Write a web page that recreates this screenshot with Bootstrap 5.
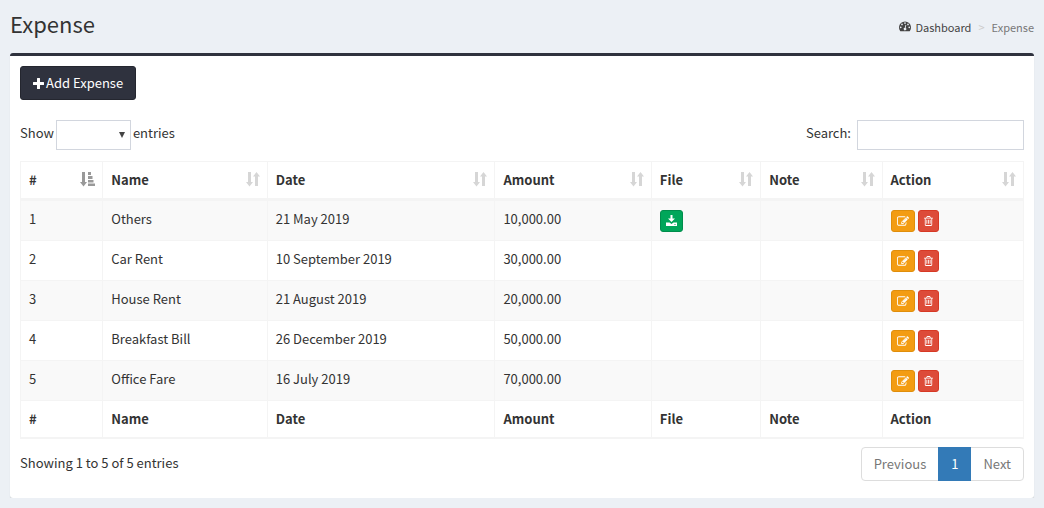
<!DOCTYPE html>
<html lang="en">
<head>
<meta charset="utf-8">
<meta name="viewport" content="width=device-width, initial-scale=1">
<title>Expense</title>
<link rel="stylesheet" href="https://cdn.jsdelivr.net/npm/bootstrap@5.3.0/dist/css/bootstrap.min.css">
<style>
  body { background: #ecf0f5; color: #333; font: 13px/20px "Noto Sans CJK SC", sans-serif; }
  .page { padding: 0 10px; }
  .page-head { padding: 10px 0 13px; }
  .page-head h1 { font-size: 22px; line-height: 26px; font-weight: 400; margin: 0; padding-bottom: 4px; }
  .breadcrumb { font-size: 11px; padding-top: 4px; --bs-breadcrumb-divider: ">"; --bs-breadcrumb-divider-color: #ccc; --bs-breadcrumb-item-padding-x: 7px; --bs-breadcrumb-item-active-color: #777; }
  .breadcrumb a { color: #444; text-decoration: none; }
  .glyph { fill: currentColor; display: block; flex: none; }
  .panel { background: #fff; border-top: 3px solid #2f323e; border-radius: 3px; box-shadow: 0 1px 1px rgba(0,0,0,.15); padding: 10px 10px 17px; }
  .btn-add { --bs-btn-font-size: 13px; --bs-btn-line-height: 20px; --bs-btn-padding-x: 12px; --bs-btn-padding-y: 6px; --bs-btn-border-radius: 3px; --bs-btn-color: #fff; --bs-btn-bg: #2f323e; --bs-btn-border-color: #24262f; --bs-btn-hover-color: #fff; --bs-btn-hover-bg: #24262f; --bs-btn-hover-border-color: #24262f; gap: 2px; }
  .controls { margin: 16px 0 11px; }
  .controls label { display: flex; align-items: center; }
  .len-label { gap: 2px; }
  .search-label { gap: 6px; }
  .field { height: 30px; margin-top: 4px; border: 1px solid #d2d6de; border-radius: 0; background-color: #fff; padding: 4px 10px; }
  .len-select { width: 75px; appearance: none; background: #fff url("data:image/svg+xml,%3Csvg xmlns='http://www.w3.org/2000/svg' viewBox='0 0 6 6'%3E%3Cpath fill='%23444' d='M0 0h6L3 6z'/%3E%3C/svg%3E") no-repeat right 5px center / 6px 6px; }
  .search-box { width: 167px; }
  .expenses { width: 100%; min-width: 640px; table-layout: fixed; border-collapse: separate; border-spacing: 0; border: 1px solid #f4f4f4; border-width: 1px 0 1px 1px; }
  .expenses th, .expenses td { padding: 8px; border: 0 solid #f4f4f4; border-right-width: 1px; vertical-align: top; }
  .expenses thead th { border-bottom-width: 2px; padding-right: 7px; }
  .expenses tbody td, .expenses tfoot th { border-top-width: 1px; }
  .expenses tfoot th { border-bottom-width: 1px; }
  .expenses tbody td { height: 40px; }
  .expenses tbody .tools { padding: 9px 8px 8px; }
  .expenses tbody tr:nth-child(odd) { background: #f9f9f9; }
  .w-id { width: 8.2%; } .w-name { width: 16.4%; } .w-date { width: 22.7%; } .w-amount { width: 15.6%; } .w-file { width: 10.9%; } .w-note { width: 12.1%; }
  .sort { fill: #d6d6d6; margin-top: 1px; }
  .sort-on { fill: #999; }
  .act { height: 22px; padding: 0 5px; border: 1px solid; border-radius: 3px; color: #fff; display: flex; align-items: center; }
  .act-edit { background: #f39c12; border-color: #e08e0b; }
  .act-del { background: #dd4b39; border-color: #d73925; }
  .act-save { background: #00a65a; border-color: #008d4c; }
  .act .glyph { margin-bottom: 1px; }
  .act-group { gap: 3px; }
  .foot { padding-top: 8px; }
  .foot-info { padding-bottom: 2px; }
  .pagination { --bs-pagination-font-size: 13px; --bs-pagination-padding-x: 12px; --bs-pagination-padding-y: 6px; --bs-pagination-color: #777; --bs-pagination-border-color: #ddd; --bs-pagination-disabled-color: #777; --bs-pagination-disabled-bg: #fff; --bs-pagination-disabled-border-color: #ddd; --bs-pagination-active-bg: #337ab7; --bs-pagination-active-border-color: #337ab7; --bs-pagination-border-radius: 4px; }
</style>
</head>
<body>
<svg class="d-none" aria-hidden="true">
  <symbol id="i-edit" viewBox="0 0 1792 1408"><path transform="translate(0 -128)" d="M888 1184l116-116-152-152-116 116v56h96v96h56zm440-720q-16-16-33 1L945 815q-17 17-1 33t33-1l350-350q17-17 1-33zm80 594v190q0 119-84.500 203.500T1120 1536H288q-119 0-203.500-84.500T0 1248V416q0-119 84.500-203.500T288 128h832q63 0 117 25 15 7 18 23 3 17-9 29l-49 49q-14 14-32 8-23-6-45-6H288q-66 0-113 47t-47 113v832q0 66 47 113t113 47h832q66 0 113-47t47-113v-126q0-13 9-22l64-64q15-15 35-7t20 29zm-96-738l288 288-672 672H640V992zm444 132l-92 92-288-288 92-92q28-28 68-28t68 28l152 152q28 28 28 68t-28 68z"/></symbol>
  <symbol id="i-trash" viewBox="192 128 1408 1536"><path d="M704 736v576q0 14-9 23t-23 9h-64q-14 0-23-9t-9-23V736q0-14 9-23t23-9h64q14 0 23 9t9 23zm256 0v576q0 14-9 23t-23 9h-64q-14 0-23-9t-9-23V736q0-14 9-23t23-9h64q14 0 23 9t9 23zm256 0v576q0 14-9 23t-23 9h-64q-14 0-23-9t-9-23V736q0-14 9-23t23-9h64q14 0 23 9t9 23zm128 724V512H448v948q0 22 7 40.500t14.500 27 10.500 8.500h832q3 0 10.500-8.500t14.500-27 7-40.500zM672 384h448l-48-117q-7-9-17-11H738q-10 2-17 11zm928 32v64q0 14-9 23t-23 9h-96v948q0 83-47 143.500t-113 60.500H480q-66 0-113-58.500T320 1464V512h-96q-14 0-23-9t-9-23v-64q0-14 9-23t23-9h309l70-167q15-37 54-63t79-26h320q40 0 79 26t54 63l70 167h309q14 0 23 9t9 23z"/></symbol>
  <symbol id="i-sort" viewBox="0 0 14 16"><path d="M2 1h3v10h2l-3.500 4.500L0 11h2zM9 15V5.500H7L10.500 1 14 5.500h-2V15z"/></symbol>
</svg>
<div class="container-fluid page">
  <header class="page-head d-flex justify-content-between align-items-center">
    <h1>Expense</h1>
    <nav aria-label="breadcrumb">
      <ol class="breadcrumb mb-0">
        <li class="breadcrumb-item"><a href="#" class="d-inline-flex align-items-center gap-1"><svg class="glyph" width="12" height="11" viewBox="0 0 14 12"><path fill-rule="evenodd" d="M1.500 11.500A7 7 0 1 1 12.500 11.500zM2 6a1 1 0 1 0 0 2 1 1 0 0 0 0-2zM3.500 2.600a1 1 0 1 0 0 2 1 1 0 0 0 0-2zM7 1a1 1 0 1 0 0 2 1 1 0 0 0 0-2zM10.500 2.600a1 1 0 1 0 0 2 1 1 0 0 0 0-2zM12 6a1 1 0 1 0 0 2 1 1 0 0 0 0-2zM7.600 4L6.800 7.500a1.500 1.500 0 1 0 1 .2L8.500 4.200z"/></svg>Dashboard</a></li>
        <li class="breadcrumb-item active" aria-current="page">Expense</li>
      </ol>
    </nav>
  </header>
  <main class="panel">
    <button type="button" class="btn btn-add d-flex align-items-center"><svg class="glyph" width="11" height="11" viewBox="0 0 11 11"><path d="M4 .5Q4 0 4.500 0h2Q7 0 7 .5V4h3.500q.5 0 .5.500v2q0 .5-.5.500H7v3.500q0 .5-.5.500h-2Q4 11 4 10.500V7H.5Q0 7 0 6.500v-2Q0 4 .5 4H4z"/></svg>Add Expense</button>
    <div class="controls d-flex flex-wrap justify-content-between">
      <label class="len-label">Show <select class="field len-select"><option></option></select> entries</label>
      <label class="search-label">Search: <input type="search" class="field search-box"></label>
    </div>
    <div class="table-responsive">
      <table class="expenses">
        <colgroup><col class="w-id"><col class="w-name"><col class="w-date"><col class="w-amount"><col class="w-file"><col class="w-note"><col></colgroup>
        <thead>
          <tr>
            <th scope="col"><div class="d-flex justify-content-between"># <svg class="sort sort-on" width="15" height="16" viewBox="0 0 15 16"><path d="M2 1h3v10h2l-3.500 4.500L0 11h2zM8 1h3v3H8zM8 5h4.500v3H8zM8 9h5.500v2.500H8zM8 12.500h7V15H8z"/></svg></div></th>
            <th scope="col"><div class="d-flex justify-content-between">Name <svg class="sort" width="14" height="16"><use href="#i-sort"/></svg></div></th>
            <th scope="col"><div class="d-flex justify-content-between">Date <svg class="sort" width="14" height="16"><use href="#i-sort"/></svg></div></th>
            <th scope="col"><div class="d-flex justify-content-between">Amount <svg class="sort" width="14" height="16"><use href="#i-sort"/></svg></div></th>
            <th scope="col"><div class="d-flex justify-content-between">File <svg class="sort" width="14" height="16"><use href="#i-sort"/></svg></div></th>
            <th scope="col"><div class="d-flex justify-content-between">Note <svg class="sort" width="14" height="16"><use href="#i-sort"/></svg></div></th>
            <th scope="col"><div class="d-flex justify-content-between">Action <svg class="sort" width="14" height="16"><use href="#i-sort"/></svg></div></th>
          </tr>
        </thead>
        <tbody>
          <tr><td>1</td><td>Others</td><td>21 May 2019</td><td>10,000.00</td><td class="tools"><button type="button" class="act act-save" aria-label="Download"><svg class="glyph" width="11" height="11" viewBox="0 0 11 11"><path d="M4.500 0h2v3.500H9L5.500 7 2 3.500h2.500zM0 7.500h3.500l2 1.500 2-1.500H11V11H0zM8.500 9v1h1V9z" fill-rule="evenodd"/></svg></button></td><td></td>
            <td class="tools"><div class="d-flex act-group"><button type="button" class="act act-edit" aria-label="Edit"><svg class="glyph" width="12" height="10"><use href="#i-edit"/></svg></button><button type="button" class="act act-del" aria-label="Delete"><svg class="glyph" width="9" height="10"><use href="#i-trash"/></svg></button></div></td></tr>
          <tr><td>2</td><td>Car Rent</td><td>10 September 2019</td><td>30,000.00</td><td></td><td></td>
            <td class="tools"><div class="d-flex act-group"><button type="button" class="act act-edit" aria-label="Edit"><svg class="glyph" width="12" height="10"><use href="#i-edit"/></svg></button><button type="button" class="act act-del" aria-label="Delete"><svg class="glyph" width="9" height="10"><use href="#i-trash"/></svg></button></div></td></tr>
          <tr><td>3</td><td>House Rent</td><td>21 August 2019</td><td>20,000.00</td><td></td><td></td>
            <td class="tools"><div class="d-flex act-group"><button type="button" class="act act-edit" aria-label="Edit"><svg class="glyph" width="12" height="10"><use href="#i-edit"/></svg></button><button type="button" class="act act-del" aria-label="Delete"><svg class="glyph" width="9" height="10"><use href="#i-trash"/></svg></button></div></td></tr>
          <tr><td>4</td><td>Breakfast Bill</td><td>26 December 2019</td><td>50,000.00</td><td></td><td></td>
            <td class="tools"><div class="d-flex act-group"><button type="button" class="act act-edit" aria-label="Edit"><svg class="glyph" width="12" height="10"><use href="#i-edit"/></svg></button><button type="button" class="act act-del" aria-label="Delete"><svg class="glyph" width="9" height="10"><use href="#i-trash"/></svg></button></div></td></tr>
          <tr><td>5</td><td>Office Fare</td><td>16 July 2019</td><td>70,000.00</td><td></td><td></td>
            <td class="tools"><div class="d-flex act-group"><button type="button" class="act act-edit" aria-label="Edit"><svg class="glyph" width="12" height="10"><use href="#i-edit"/></svg></button><button type="button" class="act act-del" aria-label="Delete"><svg class="glyph" width="9" height="10"><use href="#i-trash"/></svg></button></div></td></tr>
        </tbody>
        <tfoot>
          <tr><th>#</th><th>Name</th><th>Date</th><th>Amount</th><th>File</th><th>Note</th><th>Action</th></tr>
        </tfoot>
      </table>
    </div>
    <div class="foot d-flex flex-wrap justify-content-between align-items-center">
      <div class="foot-info">Showing 1 to 5 of 5 entries</div>
      <nav aria-label="Table pages">
        <ul class="pagination mb-0">
          <li class="page-item disabled"><a class="page-link" href="#">Previous</a></li>
          <li class="page-item active"><a class="page-link" href="#" aria-current="page">1</a></li>
          <li class="page-item disabled"><a class="page-link" href="#">Next</a></li>
        </ul>
      </nav>
    </div>
  </main>
</div>
<script src="https://cdn.jsdelivr.net/npm/bootstrap@5.3.0/dist/js/bootstrap.bundle.min.js"></script>
</body>
</html>
